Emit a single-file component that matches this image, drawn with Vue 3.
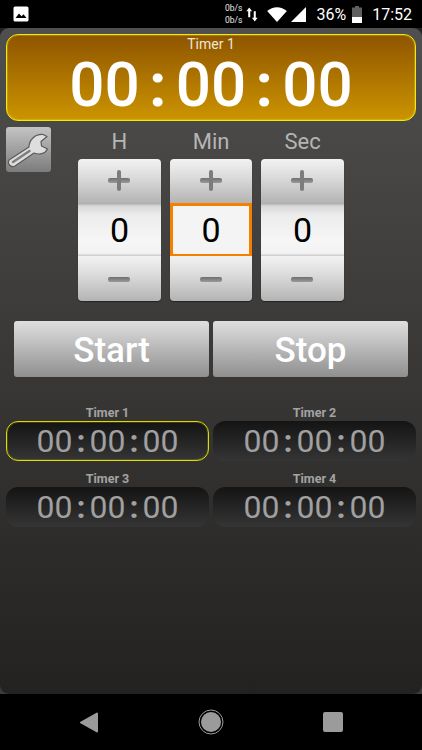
<template>
  <div class="screen">
    <header class="status">
      <svg class="pic" width="16" height="16" viewBox="0 0 16 16"><rect x="0.5" y="0.5" width="15" height="15" rx="1.6" fill="#fff"/><path d="M2.5 12 L6 7.5 L8.5 10.3 L10.5 8.2 L13.5 12 Z" fill="#000"/></svg>
      <div class="spacer"></div>
      <div class="speed"><span>0b/s</span><span>0b/s</span></div>
      <svg class="arrows" width="12" height="17" viewBox="0 0 13 17"><path d="M3.5 1 L6.6 5 L4.6 5 L4.6 11.5 L2.4 11.5 L2.4 5 L0.4 5 Z M8.4 5 L10.6 5 L10.6 12 L12.6 12 L9.5 16 L6.4 12 L8.4 12 Z" fill="#fff"/></svg>
      <svg class="wifi" width="20" height="15" viewBox="0 0 21 16"><path d="M0 4.2 C6 -1.2 15 -1.2 21 4.2 L10.5 16 Z" fill="#fff"/></svg>
      <svg class="signal" width="15" height="15" viewBox="0 0 16 16"><path d="M16 0 L16 16 L0 16 Z" fill="#fff"/></svg>
      <span class="pct">36%</span>
      <svg class="batt" width="10" height="17" viewBox="0 0 10 17"><path d="M3 0 H7 V1.5 H10 V17 H0 V1.5 H3 Z" fill="#5f5f5f"/><path d="M0 11 H10 V17 H0 Z" fill="#fff"/></svg>
      <span class="clock">17:52</span>
    </header>

    <div class="app-back">
      <main class="app">
        <section class="banner">
          <div class="banner-name">Timer 1</div>
          <div class="banner-time">
            <template v-for="(part, i) in parts" :key="i">
              <span v-if="i" class="sep">:</span><span>{{ part }}</span>
            </template>
          </div>
        </section>

        <section class="setter">
          <button class="wrench" aria-label="Settings">
            <svg width="45" height="45" viewBox="0 0 45 45">
              <path d="M3 33 L23 20 C23 13 29 7 37 7.5 L41 9.5 L35 14.5 L35.5 19 L41.5 22 C39 27 33 28 28 26 L9 39 C5 41 1 37 3 33 Z" fill="#dedede" stroke="#5a5a5a" stroke-width="1.2" stroke-linejoin="round"/>
              <path d="M7 35 L23.5 24" stroke="#7f7f7f" stroke-width="2.6" stroke-linecap="round"/>
            </svg>
          </button>
          <div class="spinners">
            <div v-for="s in spinners" :key="s.label" class="spin-col">
              <div class="spin-label">{{ s.label }}</div>
              <div class="spinner">
                <div class="spin-btn plus"><span class="mark h"></span><span class="mark v"></span></div>
                <div class="spin-value" :class="{ focused: s.focused }">0</div>
                <div class="spin-btn minus"><span class="mark h"></span></div>
              </div>
            </div>
          </div>
        </section>

        <section class="actions">
          <button class="action">Start</button>
          <button class="action">Stop</button>
        </section>

        <section class="timers">
          <div v-for="t in timers" :key="t.name" class="timer">
            <div class="timer-name">{{ t.name }}</div>
            <div class="timer-box" :class="{ active: t.active }">
              <template v-for="(part, i) in parts" :key="i">
                <span v-if="i" class="sep">:</span><span>{{ part }}</span>
              </template>
            </div>
          </div>
        </section>
      </main>
    </div>

    <nav class="navbar">
      <svg width="20" height="21" viewBox="0 0 20 21"><path d="M18 1.5 V19.5 L2 10.5 Z" fill="#9b9b9b" stroke="#9b9b9b" stroke-width="2" stroke-linejoin="round"/></svg>
      <svg width="26" height="26" viewBox="0 0 26 26"><circle cx="13" cy="13" r="12" fill="none" stroke="#9b9b9b" stroke-width="1"/><circle cx="13" cy="13" r="10" fill="#9b9b9b"/></svg>
      <svg width="20" height="20" viewBox="0 0 20 20"><rect width="20" height="20" rx="2" fill="#9b9b9b"/></svg>
    </nav>
  </div>
</template>

<script setup>
const parts = ['00', '00', '00']

const spinners = [
  { label: 'H', focused: false },
  { label: 'Min', focused: true },
  { label: 'Sec', focused: false }
]

const timers = [
  { name: 'Timer 1', active: true },
  { name: 'Timer 2', active: false },
  { name: 'Timer 3', active: false },
  { name: 'Timer 4', active: false }
]
</script>

<style>
html, body { margin: 0; background: #000; }
</style>

<style scoped>
.screen {
  width: 422px;
  height: 750px;
  display: flex;
  flex-direction: column;
  overflow: hidden;
  font-family: Roboto, "Liberation Sans", sans-serif;
  background: #000;
}

/* status bar */
.status {
  height: 28px;
  flex: none;
  display: flex;
  align-items: center;
  padding: 0 10px 0 13px;
  color: #fff;
  box-sizing: border-box;
}
.spacer { flex: 1; }
.speed {
  display: flex;
  flex-direction: column;
  align-items: flex-end;
  font-size: 8.5px;
  line-height: 12px;
  margin-right: 4px;
  color: #e8e8e8;
}
.arrows { margin-right: 9px; }
.wifi { margin-right: 4px; }
.signal { margin-right: 10px; }
.pct { font-size: 16px; margin-right: 6px; }
.batt { margin-right: 10px; }
.clock { font-size: 16px; }

/* main panel */
.app-back {
  flex: 1;
  display: flex;
  background: linear-gradient(#222, #3c3c3c);
}
.app {
  flex: 1;
  display: flex;
  flex-direction: column;
  padding: 6px 6px 0;
  border-radius: 9px;
  background: linear-gradient(#4f4f4f, #474645 20%, #393837 50%, #232221);
}

.banner {
  height: 87px;
  box-sizing: border-box;
  border: 1px solid #f2ea00;
  border-radius: 12px;
  box-shadow: inset 0 0 0 1px rgba(242, 234, 0, .25);
  background: linear-gradient(#8e5500, #cc9400);
  color: #fff;
  text-align: center;
}
.banner-name { font-size: 14px; line-height: 16px; padding-top: 1px; color: #f0e6d2; }
.banner-time {
  display: flex;
  justify-content: center;
  font-size: 62px;
  font-weight: 500;
  line-height: 62px;
  margin-top: 2px;
}
.banner-time .sep { width: 36px; text-align: center; font-weight: 700; }

.setter {
  display: flex;
  margin-top: 6px;
  height: 174px;
}
.wrench {
  width: 45px;
  height: 45px;
  padding: 0;
  border: 0;
  border-radius: 3px;
  background: linear-gradient(#c4c4c4, #7c7c7c);
  flex: none;
}
.spinners {
  display: flex;
  gap: 9.3px;
  margin-left: 27.3px;
}
.spin-col { width: 82.3px; }
.spin-label {
  height: 32px;
  line-height: 30px;
  text-align: center;
  font-size: 22px;
  color: #b5b5b5;
}
.spinner {
  height: 142px;
  display: flex;
  flex-direction: column;
  border-radius: 4px;
  overflow: hidden;
  box-shadow: 0 1px 1px rgba(0,0,0,.4);
}
.spin-btn {
  height: 44px;
  position: relative;
  background: linear-gradient(#f2f2f2, #dcdcdc 40%, #b4b4b4);
}
.minus { height: 45px; }
.spin-value {
  height: 53px;
  box-sizing: border-box;
  display: flex;
  align-items: center;
  justify-content: center;
  font-size: 34px;
  color: #000;
  background: linear-gradient(#a8a8a8, #d8d8d8 3px, #ececec 12px, #f6f6f6 70%, #f2f2f2 95%, #c8c8c8);
}
.spin-value.focused {
  height: 54px;
  margin-bottom: -1px;
  position: relative;
  border: 3px solid #f58000;
  background: #f4f4f4;
}
.mark {
  position: absolute;
  background: linear-gradient(#6f6f6f, #999);
  border-radius: 2px;
}
.mark.h { left: 30px; width: 22px; height: 5px; top: 19px; }
.mark.v { left: 39px; width: 4px; height: 21px; top: 11px; background: #7c7c7c; }
.minus .mark.h { top: 21px; }

.actions {
  display: flex;
  gap: 4px;
  padding-left: 8px;
  margin-top: 20px;
}
.action {
  width: 195px;
  height: 56px;
  padding: 3px 0 0;
  border: 0;
  border-radius: 3px;
  background: linear-gradient(#dfdfdf, #8f8f8f);
  color: #fff;
  font-family: inherit;
  font-size: 35px;
  font-weight: 500;
}

.timers {
  display: grid;
  grid-template-columns: 203px 203px;
  column-gap: 4px;
  row-gap: 10px;
  margin-top: 28px;
}
.timer-name {
  height: 16px;
  line-height: 16px;
  text-align: center;
  font-size: 12.5px;
  font-weight: 700;
  color: #a3a3a3;
}
.timer-box {
  height: 40px;
  box-sizing: border-box;
  border-radius: 12px;
  background: linear-gradient(#141414, #353535);
  color: #a0a0a0;
  display: flex;
  justify-content: center;
  font-size: 32px;
  line-height: 40px;
}
.timer-box .sep { width: 17px; text-align: center; font-weight: 700; }
.timer-box.active {
  border: 1px solid #dcdc00;
  box-shadow: inset 0 0 0 1px rgba(220, 220, 0, .2);
  line-height: 38px;
}

.navbar {
  height: 56px;
  flex: none;
  display: flex;
  align-items: center;
  background: #000;
  justify-content: space-between;
  padding: 0 79px;
}
</style>
